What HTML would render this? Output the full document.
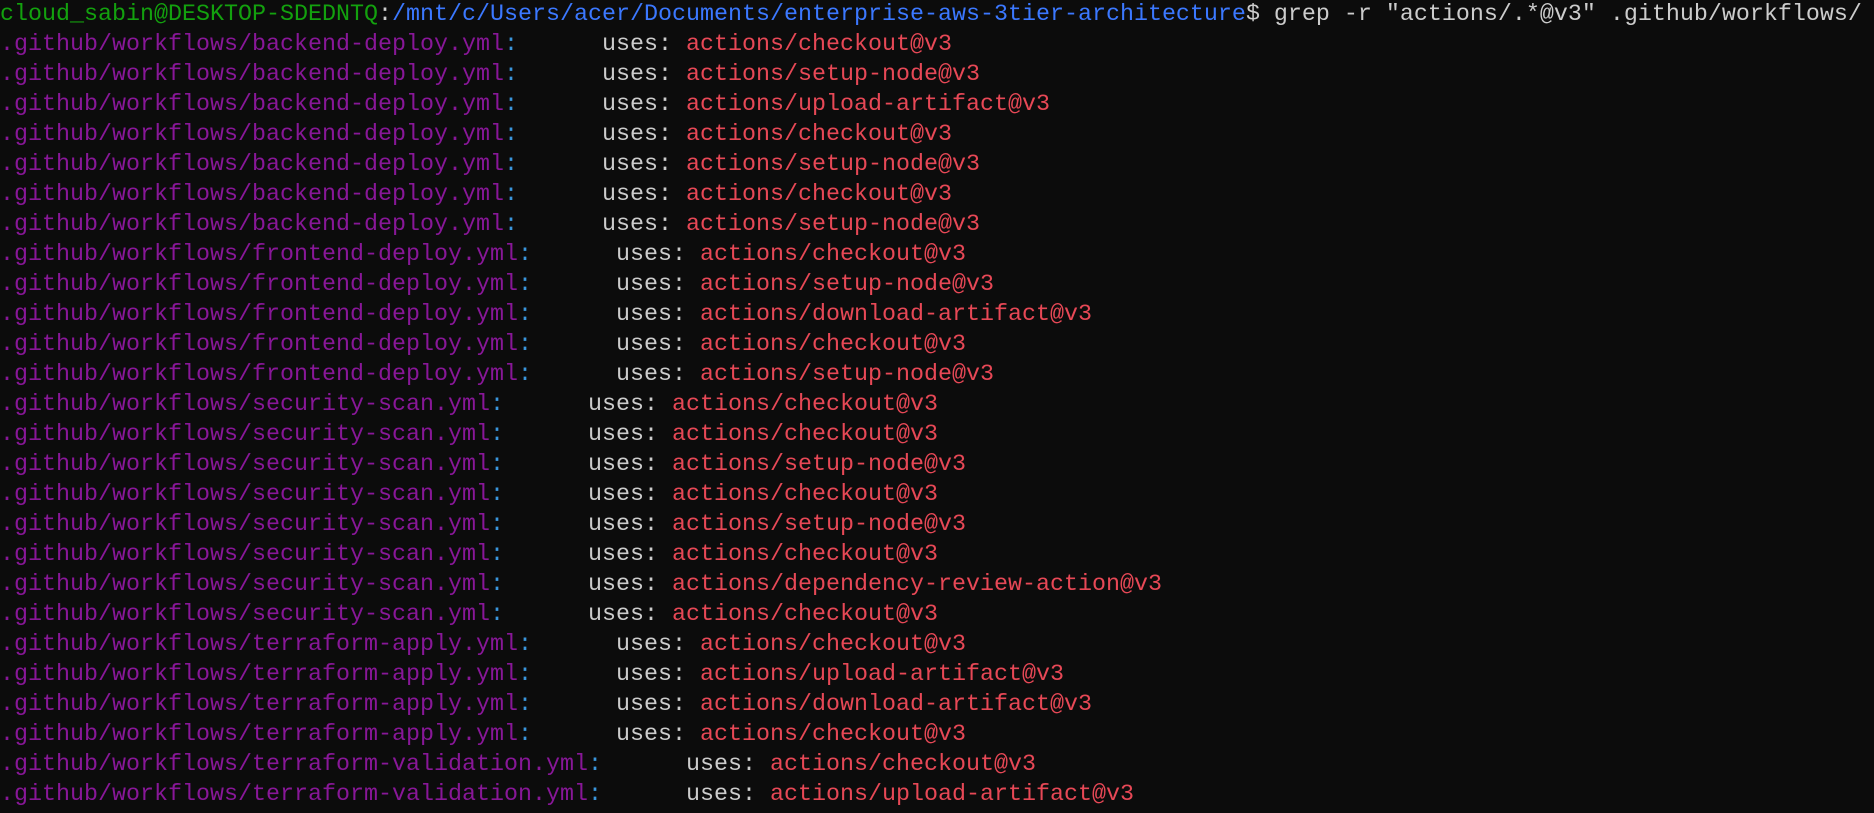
<!DOCTYPE html>
<html><head><meta charset="utf-8"><style>
html,body{margin:0;padding:0;background:#0c0c0c;width:1874px;height:813px;overflow:hidden}
#w{position:relative;width:1874px;height:813px;overflow:hidden;background:#0c0c0c}
pre{margin:0;position:absolute;left:0;top:0px;font-family:"Liberation Mono",monospace;font-size:23.33px;line-height:30px;color:#cccccc;white-space:pre}
.g{color:#13a10e}.b{color:#3b78ff}.m{color:#881798}.c{color:#3a96dd}.r{color:#e74856}
</style></head><body><div id="w"><pre><span class="g">cloud_sabin@DESKTOP-SDEDNTQ</span>:<span class="b">/mnt/c/Users/acer/Documents/enterprise-aws-3tier-architecture</span>$ grep -r "actions/.*@v3" .github/workflows/
<span class="m">.github/workflows/backend-deploy.yml</span><span class="c">:</span>      uses: <span class="r">actions/checkout@v3</span>
<span class="m">.github/workflows/backend-deploy.yml</span><span class="c">:</span>      uses: <span class="r">actions/setup-node@v3</span>
<span class="m">.github/workflows/backend-deploy.yml</span><span class="c">:</span>      uses: <span class="r">actions/upload-artifact@v3</span>
<span class="m">.github/workflows/backend-deploy.yml</span><span class="c">:</span>      uses: <span class="r">actions/checkout@v3</span>
<span class="m">.github/workflows/backend-deploy.yml</span><span class="c">:</span>      uses: <span class="r">actions/setup-node@v3</span>
<span class="m">.github/workflows/backend-deploy.yml</span><span class="c">:</span>      uses: <span class="r">actions/checkout@v3</span>
<span class="m">.github/workflows/backend-deploy.yml</span><span class="c">:</span>      uses: <span class="r">actions/setup-node@v3</span>
<span class="m">.github/workflows/frontend-deploy.yml</span><span class="c">:</span>      uses: <span class="r">actions/checkout@v3</span>
<span class="m">.github/workflows/frontend-deploy.yml</span><span class="c">:</span>      uses: <span class="r">actions/setup-node@v3</span>
<span class="m">.github/workflows/frontend-deploy.yml</span><span class="c">:</span>      uses: <span class="r">actions/download-artifact@v3</span>
<span class="m">.github/workflows/frontend-deploy.yml</span><span class="c">:</span>      uses: <span class="r">actions/checkout@v3</span>
<span class="m">.github/workflows/frontend-deploy.yml</span><span class="c">:</span>      uses: <span class="r">actions/setup-node@v3</span>
<span class="m">.github/workflows/security-scan.yml</span><span class="c">:</span>      uses: <span class="r">actions/checkout@v3</span>
<span class="m">.github/workflows/security-scan.yml</span><span class="c">:</span>      uses: <span class="r">actions/checkout@v3</span>
<span class="m">.github/workflows/security-scan.yml</span><span class="c">:</span>      uses: <span class="r">actions/setup-node@v3</span>
<span class="m">.github/workflows/security-scan.yml</span><span class="c">:</span>      uses: <span class="r">actions/checkout@v3</span>
<span class="m">.github/workflows/security-scan.yml</span><span class="c">:</span>      uses: <span class="r">actions/setup-node@v3</span>
<span class="m">.github/workflows/security-scan.yml</span><span class="c">:</span>      uses: <span class="r">actions/checkout@v3</span>
<span class="m">.github/workflows/security-scan.yml</span><span class="c">:</span>      uses: <span class="r">actions/dependency-review-action@v3</span>
<span class="m">.github/workflows/security-scan.yml</span><span class="c">:</span>      uses: <span class="r">actions/checkout@v3</span>
<span class="m">.github/workflows/terraform-apply.yml</span><span class="c">:</span>      uses: <span class="r">actions/checkout@v3</span>
<span class="m">.github/workflows/terraform-apply.yml</span><span class="c">:</span>      uses: <span class="r">actions/upload-artifact@v3</span>
<span class="m">.github/workflows/terraform-apply.yml</span><span class="c">:</span>      uses: <span class="r">actions/download-artifact@v3</span>
<span class="m">.github/workflows/terraform-apply.yml</span><span class="c">:</span>      uses: <span class="r">actions/checkout@v3</span>
<span class="m">.github/workflows/terraform-validation.yml</span><span class="c">:</span>      uses: <span class="r">actions/checkout@v3</span>
<span class="m">.github/workflows/terraform-validation.yml</span><span class="c">:</span>      uses: <span class="r">actions/upload-artifact@v3</span>
<span class="g">cloud_sabin@DESKTOP-SDEDNTQ</span>:<span class="b">/mnt/c/Users/acer/Documents/enterprise-aws-3tier-architecture</span>$ find . -name "*.yml" -type f | xargs ll</pre></div></body></html>
